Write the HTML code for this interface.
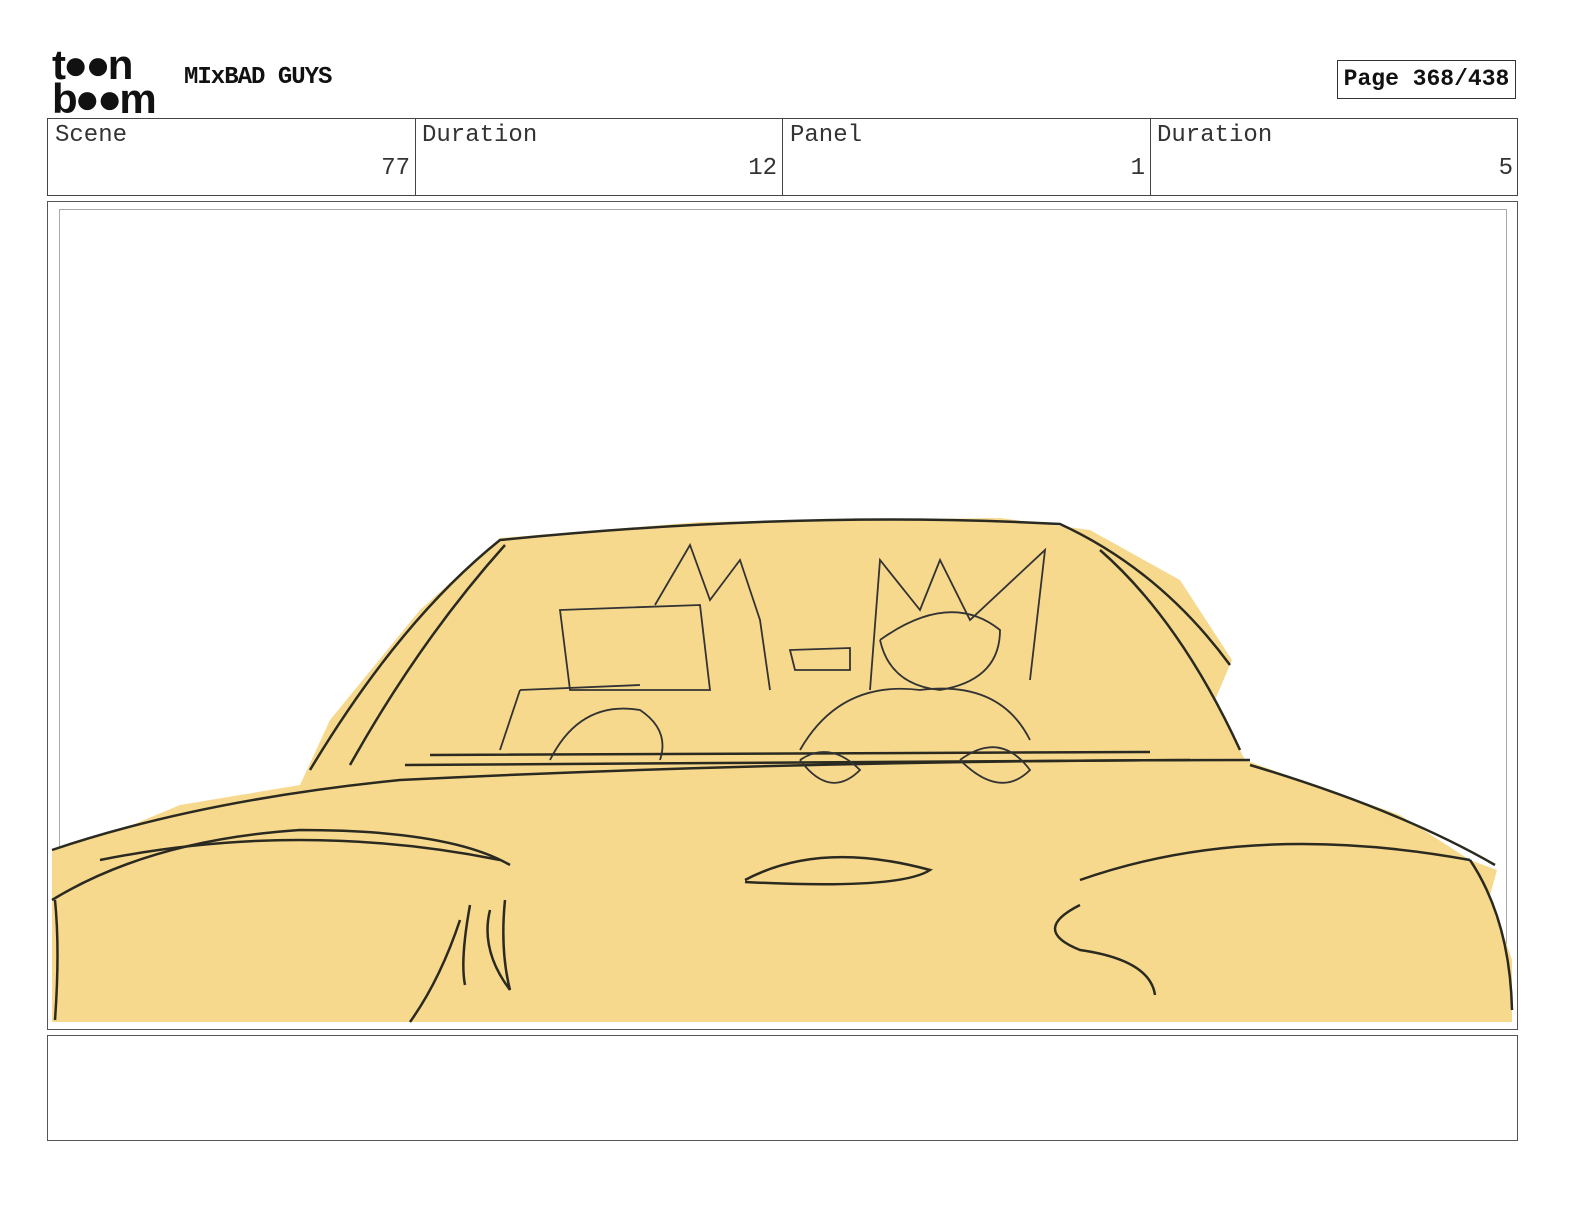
<!DOCTYPE html>
<html><head><style>
body{margin:0;width:1584px;height:1224px;background:#fff;position:relative;font-family:"Liberation Mono",monospace;overflow:hidden}
.a{position:absolute}
.lbl{font-size:24px;color:#333}
</style></head><body>
<div class="a" style="left:52px;top:48px;font:bold 42px/34px 'Liberation Sans',sans-serif;letter-spacing:-3px;color:#111">t●●n<br>b●●m</div>
<div class="a" style="left:184px;top:64px;font:bold 24px 'Liberation Mono',monospace;letter-spacing:-1px;color:#111">MIxBAD GUYS</div>
<div class="a" style="left:1337px;top:60px;width:179px;height:39px;border:1px solid #333;box-sizing:border-box;font:bold 23px/37px 'Liberation Mono',monospace;text-align:center;color:#111">Page 368/438</div>
<div class="a" style="left:47px;top:118px;width:1471px;height:78px;border:1px solid #444;box-sizing:border-box"></div>
<div class="a" style="left:415px;top:118px;width:1px;height:78px;background:#444"></div>
<div class="a" style="left:782px;top:118px;width:1px;height:78px;background:#444"></div>
<div class="a" style="left:1150px;top:118px;width:1px;height:78px;background:#444"></div>
<div class="a lbl" style="left:55px;top:122px">Scene</div>
<div class="a lbl" style="left:422px;top:122px">Duration</div>
<div class="a lbl" style="left:790px;top:122px">Panel</div>
<div class="a lbl" style="left:1157px;top:122px">Duration</div>
<div class="a lbl" style="left:360px;top:155px;width:50px;text-align:right">77</div>
<div class="a lbl" style="left:720px;top:155px;width:57px;text-align:right">12</div>
<div class="a lbl" style="left:1090px;top:155px;width:55px;text-align:right">1</div>
<div class="a lbl" style="left:1460px;top:155px;width:53px;text-align:right">5</div>
<div class="a" style="left:47px;top:201px;width:1471px;height:829px;border:1px solid #555;box-sizing:border-box"></div>
<svg class="a" style="left:0;top:0" width="1584" height="1224">
<rect x="59.5" y="209.5" width="1447" height="812" fill="none" stroke="#aaa"/>
<path d="M52 850 L120 830 L180 805 L300 785 L330 720 L420 610 L500 538 L700 522 L1000 518 L1090 530 L1180 580 L1232 660 L1215 700 L1245 760 L1300 780 L1400 815 L1470 860 L1497 870 L1490 895 L1512 960 L1512 1022 L52 1022 Z" fill="#f7d98e"/>
<g fill="none" stroke="#2a2a20" stroke-width="2.5">
<path d="M52 850 Q200 800 400 780 Q800 760 1250 760"/>
<path d="M52 900 Q150 840 300 830 Q450 830 510 865"/>
<path d="M100 860 Q300 820 500 860"/>
<path d="M310 770 Q400 620 500 540 Q800 510 1060 524 Q1160 570 1230 665"/>
<path d="M350 765 Q420 640 505 545"/>
<path d="M1100 550 Q1180 620 1240 750"/>
<path d="M1250 765 Q1400 810 1495 865"/>
<path d="M1080 880 Q1250 820 1470 860"/>
<path d="M1470 860 Q1510 920 1512 1010"/>
<path d="M745 880 Q820 840 930 870 Q900 890 745 882"/>
<path d="M1155 995 Q1150 960 1080 950 Q1030 930 1080 905"/>
<path d="M470 905 Q460 960 465 985 M490 910 Q480 950 510 990 M505 900 Q500 950 510 990"/>
<path d="M55 1020 Q60 950 55 900"/>
<path d="M410 1022 Q440 980 460 920"/>
<path d="M405 765 L1190 760 M430 755 L1150 752"/>
</g>
<g fill="none" stroke="#333" stroke-width="1.8">
<path d="M560 610 L700 605 L710 690 L570 690 Z"/>
<path d="M655 605 L690 545 L710 600 L740 560 L760 620 L770 690"/>
<path d="M870 690 L880 560 L920 610 L940 560 L970 620 L1045 550 L1030 680"/>
<path d="M880 640 Q950 590 1000 630 Q1000 680 940 690 Q890 685 880 640"/>
<path d="M520 690 L500 750 M520 690 L640 685 M550 760 Q580 700 640 710 Q670 730 660 760"/>
<path d="M800 750 Q840 680 920 690 Q1000 680 1030 740"/>
<path d="M790 650 L850 648 L850 670 L795 670 Z"/>
<path d="M800 760 Q830 740 860 770 Q830 800 800 760 M960 760 Q1000 730 1030 770 Q1000 800 960 760"/>
</g>
</svg>
<div class="a" style="left:47px;top:1035px;width:1471px;height:106px;border:1px solid #555;box-sizing:border-box"></div>
</body></html>
